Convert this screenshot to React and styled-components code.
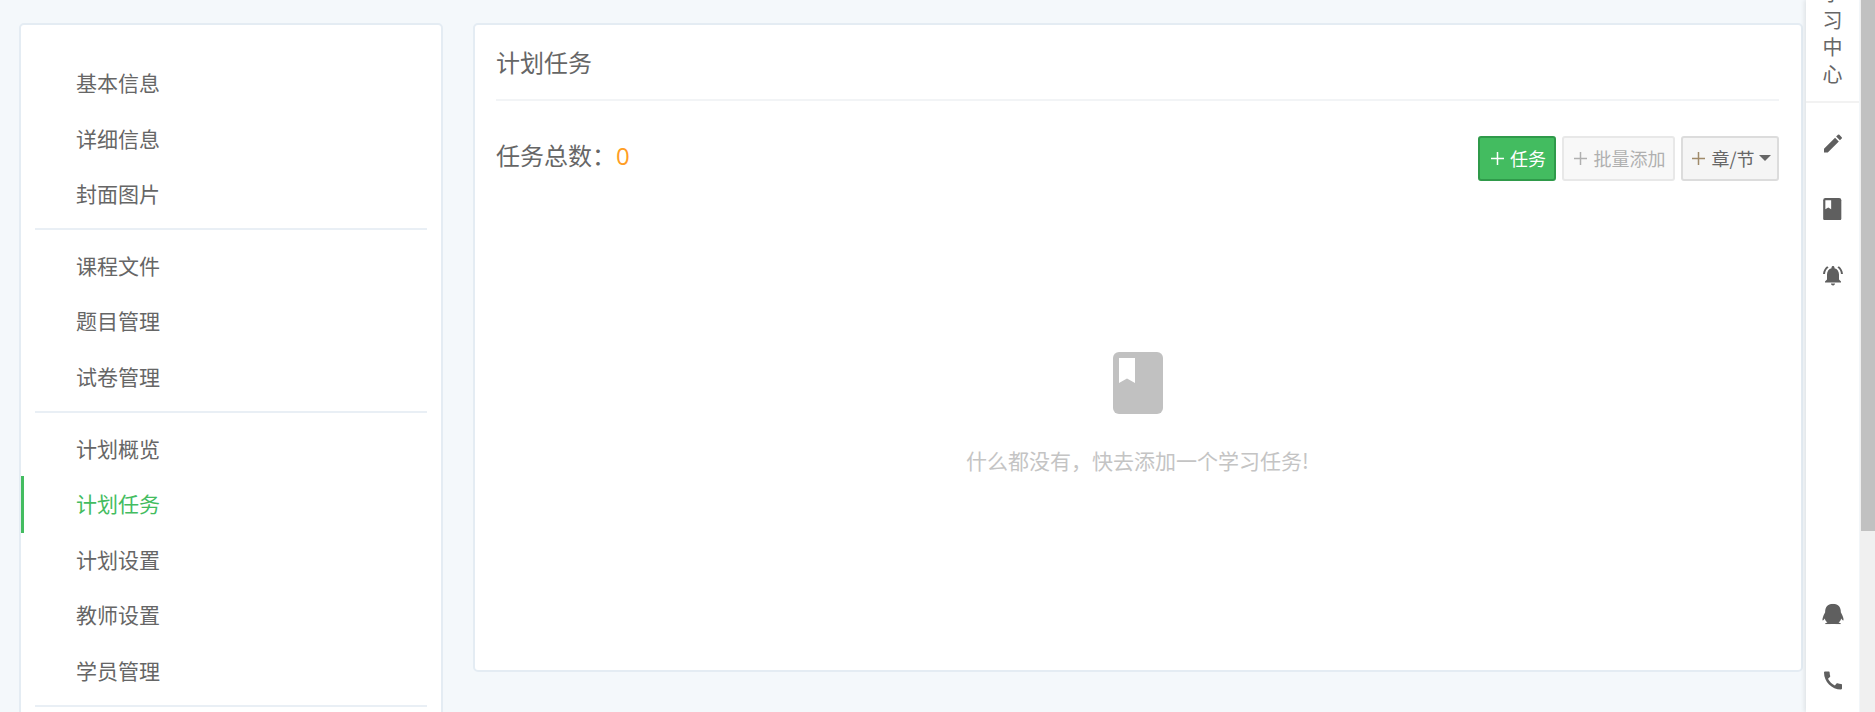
import React from 'react'
import styled, { createGlobalStyle } from 'styled-components'
import { MdEdit, MdNotificationsActive, MdCall } from 'react-icons/md'
import { FaQq } from 'react-icons/fa'

const GlobalStyle = createGlobalStyle`
  html, body {
    margin: 0;
    padding: 0;
    height: 100%;
    overflow: hidden;
    background: #f4f8fb;
    font-family: "Noto Sans CJK SC", "Liberation Sans", sans-serif;
    color: #666;
  }
`

const Page = styled.div`
  display: flex;
  height: 712px;
  overflow: hidden;
`

const Content = styled.div`
  flex: 1;
  display: flex;
  align-items: flex-start;
  gap: 30px;
  padding: 23px 3px 0 19px;
`

const Sidebar = styled.div`
  width: 424px;
  flex-shrink: 0;
  box-sizing: border-box;
  background: #fff;
  border: 2px solid #e4ecf3;
  border-radius: 5px;
  padding: 30px 0 0;
`

const MenuGroup = styled.div`
  margin: 0 14px 8px;
  padding-bottom: 6px;
  border-bottom: 2px solid #e9eff5;
`

const MenuItem = styled.div`
  position: relative;
  height: 55.6px;
  line-height: 55.6px;
  padding-left: 41px;
  font-size: 21px;
  color: ${props => (props.$active ? '#43bc60' : '#666')};

  &::before {
    content: ${props => (props.$active ? '""' : 'none')};
    position: absolute;
    left: -14px;
    top: 0;
    bottom: -1px;
    width: 3px;
    background: #43bc60;
  }
`

const Main = styled.div`
  flex: 1;
  height: 649px;
  box-sizing: border-box;
  background: #fff;
  border: 2px solid #e4ecf3;
  border-radius: 5px;
  padding: 0 22px 0 21px;
  display: flex;
  flex-direction: column;
`

const MainTitle = styled.div`
  height: 74px;
  line-height: 74px;
  font-size: 24px;
  border-bottom: 2px solid #f2f4f6;
`

const TaskBar = styled.div`
  display: flex;
  align-items: center;
  justify-content: space-between;
  margin-top: 34px;
`

const TaskCount = styled.div`
  font-size: 24px;
  line-height: 39px;
  padding-bottom: 6px;
`

const CountNumber = styled.span`
  color: #ff9d24;
  font-family: "Open Sans", sans-serif;
`

const Buttons = styled.div`
  display: flex;
  gap: 6px;
`

const Button = styled.div`
  box-sizing: border-box;
  height: 45px;
  display: flex;
  align-items: center;
  gap: 4px;
  padding: 0 ${props => props.$pad}px;
  font-size: 18px;
  border-radius: 3px;
  border: 2px solid ${props => props.$border};
  background: ${props => props.$bg};
  color: ${props => props.$color};
`

const Plus = styled.svg`
  width: 15px;
  height: 15px;
  margin: 0 1px 0 2px;
  stroke: ${props => props.$color};
  stroke-width: 1.5;
`

const Caret = styled.span`
  width: 0;
  height: 0;
  border-left: 6px solid transparent;
  border-right: 6px solid transparent;
  border-top: 6px solid #666;
`

const EmptyState = styled.div`
  display: flex;
  flex-direction: column;
  align-items: center;
  margin-top: 171px;
`

const EmptyIcon = styled.div`
  width: 50px;
  height: 62px;
`

const EmptyText = styled.div`
  margin-top: 31px;
  font-size: 21px;
  line-height: 30px;
  color: #c4c4c4;
`

const Rail = styled.div`
  width: 53px;
  flex-shrink: 0;
  margin-right: 1px;
  background: #fff;
  box-shadow: -2px 0 4px rgba(0, 0, 0, 0.08);
  display: flex;
  flex-direction: column;
  align-items: center;
`

const RailTitle = styled.div`
  width: 100%;
  height: 87px;
  flex-shrink: 0;
  overflow: hidden;
  display: flex;
  flex-direction: column;
  justify-content: flex-end;
  align-items: center;
  border-bottom: 2px solid #f2f2f2;
  padding-bottom: 14px;
  font-size: 20px;
  line-height: 27px;
  color: #666;
`

const RailChar = styled.span`
  flex-shrink: 0;
`

const RailIcons = styled.div`
  flex: 1;
  display: flex;
  flex-direction: column;
  justify-content: space-between;
  padding: 28px 0 20px;
`

const RailGroup = styled.div`
  display: flex;
  flex-direction: column;
  align-items: center;
  gap: 42px;
`

const RailIcon = styled.div`
  width: 24px;
  height: 24px;
  display: flex;
  align-items: center;
  justify-content: center;
  color: #5f5f5f;
  font-size: ${props => props.$size || 24}px;
`

const SmallBook = styled.div`
  width: 18.5px;
  height: 22.5px;
`

const QqIcon = styled(FaQq)`
  transform: scale(1.14, 0.93);
`

const ScrollTrack = styled.div`
  width: 15px;
  flex-shrink: 0;
  background: #f0f0f0;
`

const ScrollThumb = styled.div`
  height: 531px;
  margin-left: 1px;
  background: #c1c1c1;
`

const menu = [
  ['基本信息', '详细信息', '封面图片'],
  ['课程文件', '题目管理', '试卷管理'],
  ['计划概览', '计划任务', '计划设置', '教师设置', '学员管理'],
]

const PlusIcon = ({ color }) => (
  <Plus viewBox="0 0 15 15" $color={color}>
    <path d="M7.5 1v13M1 7.5h13" />
  </Plus>
)

const BookIcon = ({ color, mark }) => (
  <svg viewBox="0 0 50 62" width="100%" height="100%" style={{ display: 'block' }}>
    <rect width="50" height="62" rx="6" fill={color} />
    <path d="M6 6h16v25l-8-4.5L6 31z" fill={mark} />
  </svg>
)

function App() {
  return (
    <Page>
      <GlobalStyle />
      <Content>
        <Sidebar>
          {menu.map((group, i) => (
            <MenuGroup key={i}>
              {group.map(item => (
                <MenuItem key={item} $active={item === '计划任务'}>{item}</MenuItem>
              ))}
            </MenuGroup>
          ))}
        </Sidebar>
        <Main>
          <MainTitle>计划任务</MainTitle>
          <TaskBar>
            <TaskCount>任务总数：<CountNumber>0</CountNumber></TaskCount>
            <Buttons>
              <Button $pad={8} $bg="#43bc60" $border="#2f9a4a" $color="#fff">
                <PlusIcon color="#fff" />任务
              </Button>
              <Button $pad={7.5} $bg="#f8f8f8" $border="#e8e8e8" $color="#b0b0b0">
                <PlusIcon color="#b0b0b0" />批量添加
              </Button>
              <Button $pad={6.5} $bg="#f5f5f5" $border="#dcdcdc" $color="#666">
                <PlusIcon color="#a08a6a" />章/节<Caret />
              </Button>
            </Buttons>
          </TaskBar>
          <EmptyState>
            <EmptyIcon><BookIcon color="#c1c1c1" mark="#fff" /></EmptyIcon>
            <EmptyText>什么都没有，快去添加一个学习任务!</EmptyText>
          </EmptyState>
        </Main>
      </Content>
      <Rail>
        <RailTitle>
          {'学习中心'.split('').map(c => <RailChar key={c}>{c}</RailChar>)}
        </RailTitle>
        <RailIcons>
          <RailGroup>
            <RailIcon $size={31}><MdEdit /></RailIcon>
            <RailIcon><SmallBook><BookIcon color="#5f5f5f" mark="#fff" /></SmallBook></RailIcon>
            <RailIcon $size={33}><MdNotificationsActive /></RailIcon>
          </RailGroup>
          <RailGroup>
            <RailIcon $size={22}><QqIcon /></RailIcon>
            <RailIcon $size={29}><MdCall /></RailIcon>
          </RailGroup>
        </RailIcons>
      </Rail>
      <ScrollTrack><ScrollThumb /></ScrollTrack>
    </Page>
  )
}

export default App
